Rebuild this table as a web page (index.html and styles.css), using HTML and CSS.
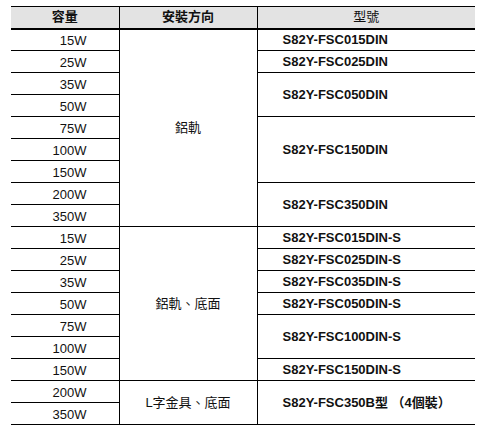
FILE: index.html
```html
<!DOCTYPE html>
<html lang="zh-Hant">
<head>
<meta charset="utf-8">
<title>S82Y</title>
<link rel="stylesheet" href="styles.css">
</head>
<body>
<table class="spec">
  <colgroup>
    <col class="c-cap">
    <col class="c-dir">
    <col class="c-model">
  </colgroup>
  <thead>
    <tr>
      <th class="h-bold">容量</th>
      <th class="h-bold">安裝方向</th>
      <th class="h-light">型號</th>
    </tr>
  </thead>
  <tbody>
    <tr><td class="cap">15W</td><td class="dir" rowspan="9">鋁軌</td><td class="model">S82Y-FSC015DIN</td></tr>
    <tr><td class="cap">25W</td><td class="model">S82Y-FSC025DIN</td></tr>
    <tr><td class="cap">35W</td><td class="model" rowspan="2">S82Y-FSC050DIN</td></tr>
    <tr><td class="cap">50W</td></tr>
    <tr><td class="cap">75W</td><td class="model" rowspan="3">S82Y-FSC150DIN</td></tr>
    <tr><td class="cap">100W</td></tr>
    <tr><td class="cap">150W</td></tr>
    <tr><td class="cap">200W</td><td class="model" rowspan="2">S82Y-FSC350DIN</td></tr>
    <tr><td class="cap">350W</td></tr>
    <tr><td class="cap">15W</td><td class="dir" rowspan="7">鋁軌、底面</td><td class="model">S82Y-FSC015DIN-S</td></tr>
    <tr><td class="cap">25W</td><td class="model">S82Y-FSC025DIN-S</td></tr>
    <tr><td class="cap">35W</td><td class="model">S82Y-FSC035DIN-S</td></tr>
    <tr><td class="cap">50W</td><td class="model">S82Y-FSC050DIN-S</td></tr>
    <tr><td class="cap">75W</td><td class="model" rowspan="2">S82Y-FSC100DIN-S</td></tr>
    <tr><td class="cap">100W</td></tr>
    <tr><td class="cap">150W</td><td class="model">S82Y-FSC150DIN-S</td></tr>
    <tr><td class="cap">200W</td><td class="dir" rowspan="2">L字金具、底面</td><td class="model" rowspan="2">S82Y-FSC350B型 （4個裝）</td></tr>
    <tr><td class="cap">350W</td></tr>
  </tbody>
</table>
</body>
</html>
```

FILE: styles.css
```css
html, body {
  margin: 0;
  padding: 0;
  background: #ffffff;
}

body {
  padding: 6px 0 0 11px;
  font-family: "Liberation Sans", Arial, "Noto Sans CJK TC", sans-serif;
  font-size: 13px;
  color: #111111;
}

.spec {
  border-collapse: collapse;
  table-layout: fixed;
  width: 464px;
}

.c-cap { width: 108px; }
.c-dir { width: 138px; }
.c-model { width: 218px; }

.spec tr {
  height: 22px;
}

.spec th,
.spec td {
  padding: 0;
  line-height: 14px;
  border-top: 1px solid #000000;
  border-bottom: 1px solid #000000;
  vertical-align: middle;
}

.spec th + th,
.spec td + td,
.spec td.dir {
  border-left: 1px solid #000000;
}

.spec thead th {
  background: #e3e3e3;
  text-align: center;
  border-bottom: 2px solid #000000;
}

.h-bold { font-weight: bold; }
.h-light { font-weight: normal; }

.spec td.cap {
  text-align: right;
  padding: 2px 32px 0 0;
}

.dir {
  text-align: center;
}

.spec td.model {
  font-weight: bold;
  padding: 1px 0 0 25px;
  text-align: left;
}
```
